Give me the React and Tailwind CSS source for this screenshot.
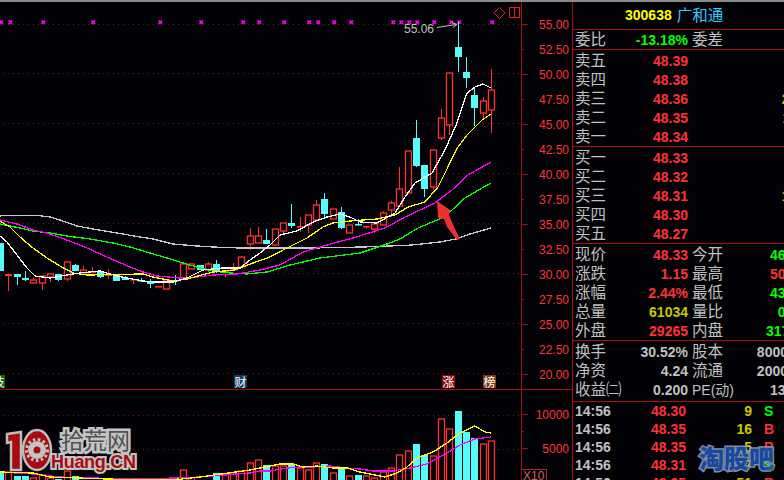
import React from "react";

const RED = "#ff3232";
const CYAN = "#54fcfc";
const BG = "#030307";

// [up, top, bottom, high, low, volume top]
const candles = [
  [0, 243, 271, 243, 271, 472], [1, 274, 276, 274, 291, 472], [0, 274, 277, 274, 285, 476], [0, 278, 280, 271, 281, 476],
  [1, 280, 283, 278, 283, 478], [1, 276, 283, 276, 290, 475], [1, 274, 277, 274, 282, 478], [0, 274, 280, 274, 281, 479],
  [1, 262, 279, 261, 281, 471], [0, 265, 271, 264, 271, 476], [1, 270, 273, 266, 274, 482], [1, 271, 273, 267, 273, 482],
  [0, 271, 277, 271, 278, 482], [1, 274, 276, 269, 279, 482], [0, 274, 281, 274, 281, 482], [0, 278, 280, 276, 280, 482],
  [1, 279, 280, 279, 284, 482], [0, 280, 281, 278, 282, 482], [0, 282, 284, 279, 288, 482], [1, 286, 287, 286, 287, 482],
  [1, 280, 289, 280, 289, 482], [0, 280, 281, 275, 285, 478], [1, 264, 279, 264, 279, 470], [1, 264, 269, 264, 269, 478],
  [0, 265, 270, 265, 270, 482], [1, 264, 270, 262, 272, 482], [0, 264, 272, 260, 273, 473], [1, 270, 272, 270, 277, 474],
  [1, 269, 270, 263, 270, 473], [1, 257, 267, 256, 267, 471], [1, 236, 244, 228, 250, 463], [1, 236, 243, 227, 243, 460],
  [0, 240, 244, 229, 244, 465], [1, 229, 245, 229, 245, 466], [1, 223, 231, 223, 235, 466], [0, 223, 226, 204, 228, 464],
  [1, 226, 227, 217, 232, 468], [1, 215, 225, 215, 233, 470], [1, 205, 220, 200, 220, 463], [0, 199, 214, 193, 219, 464],
  [1, 209, 219, 209, 219, 473], [0, 212, 228, 207, 229, 469], [1, 225, 233, 225, 233, 476], [0, 224, 225, 219, 226, 475],
  [1, 226, 227, 226, 229, 476], [1, 224, 229, 224, 233, 478], [1, 213, 225, 211, 225, 472], [1, 203, 210, 201, 217, 468],
  [1, 189, 206, 167, 206, 455], [1, 151, 193, 151, 193, 451], [0, 138, 166, 120, 167, 444], [0, 165, 189, 165, 197, 455],
  [1, 150, 187, 150, 190, 456], [1, 118, 138, 109, 140, 419], [1, 73, 125, 73, 135, 429], [0, 47, 57, 22, 72, 411],
  [0, 72, 78, 57, 88, 432], [0, 95, 108, 88, 126, 438], [1, 101, 113, 97, 118, 444], [1, 90, 110, 69, 133, 441],
];

const candleX = (i) => Math.round(1 + 8.32 * i) - 0.5;

const lines = [
  { color: "#c8c8c8", pts: "0,216 5,215.5 38,215.5 50,217 60,220 77,226 93,229 117,233 140,237 153,239 173,244 197,246 213,247 240,248 290,248 313,248 363,247 390,246 412,245 440,242 456,239 470,234 491,228" },
  { color: "#00ff00", pts: "0,224 20,228 33,231 50,233 67,236 90,239 113,243 130,247 150,253 167,258 183,263 200,268 213,271 230,273 247,274 267,272 290,265 320,258 360,253 390,243 400,239 418,228 442,218 452,210 465,198 482,188 491,183" },
  { color: "#ff00ff", pts: "0,220 17,224 33,230 47,233 67,240 87,248 107,257 130,267 143,272 157,276 180,278 197,277 213,275 237,274 260,270 280,265 303,252 327,245 353,238 385,228 405,217 435,203 452,190 468,175 491,162" },
  { color: "#ffff00", pts: "0,221 10,227 20,237 33,248 47,258 60,266 73,273 87,275 143,274 153,277 173,281 187,279 213,272 235,270 253,263 270,257 283,250 307,238 323,227 333,223 350,221 377,219 395,215 408,207 425,202 438,187 448,167 458,147 467,135 482,120 491,114" },
  { color: "#ffffff", pts: "0,236 7,242 17,255 27,268 35,276 50,278 67,275 80,273 100,271 117,276 127,278 143,281 155,282 173,282 187,278 203,270 223,268 240,268 250,260 260,253 270,245 280,235 297,231 313,222 327,217 340,214 350,217 360,222 377,223 395,213 405,197 415,183 432,173 445,150 457,123 467,93 475,87 483,84 491,88" },
];

const volLines = [
  { color: "#ff00ff", pts: "0,472 33,474 60,477 90,478 147,479 173,478 200,477 250,473 260,471 270,471 287,468 300,467 313,467 330,466 347,468 360,469 373,471 393,471 410,468 427,464 447,453 460,445 475,439 491,437" },
  { color: "#ffff00", pts: "0,472 33,473 50,477 107,479 147,480 173,480 200,477 250,470 260,468 270,466 280,464 293,464 303,467 317,466 333,468 347,468 360,472 370,474 385,477 397,473 407,467 417,458 433,452 447,443 460,433 475,426 485,432 491,433" },
];

const marks = [1, 10, 43, 93, 160, 201, 243, 259, 284, 309, 318, 334, 351, 393, 401, 409, 417, 434, 451, 459, 492];
const gridTop = [24, 73, 123, 173, 223, 273, 323, 373];
const axisLabels = ["55.00", "52.50", "50.00", "47.50", "45.00", "42.50", "40.00", "37.50", "35.00", "32.50", "30.00", "27.50", "25.00", "22.50", "20.00"];

const sellRows = [["卖五", "48.39"], ["卖四", "48.38"], ["卖三", "48.36", "235"], ["卖二", "48.35", "110"], ["卖一", "48.34"]];
const buyRows = [["买一", "48.33"], ["买二", "48.32"], ["买三", "48.31", "120"], ["买四", "48.30"], ["买五", "48.27"]];
const quoteRows = [
  ["现价", "48.33", "text-[#ff3232]", "今开", "46.85", "text-[#00ff00]"],
  ["涨跌", "1.15", "text-[#ff3232]", "最高", "50.40", "text-[#ff3232]"],
  ["涨幅", "2.44%", "text-[#ff3232]", "最低", "43.80", "text-[#00ff00]"],
  ["总量", "61034", "text-[#c8c800]", "量比", "0.92", "text-[#00ff00]"],
  ["外盘", "29265", "text-[#ff3232]", "内盘", "31769", "text-[#00ff00]"],
];
const infoRows = [
  ["换手", "30.52%", "股本", "8000万", "text-[#c0c0c0] pr-[3px]"],
  ["净资", "4.24", "流通", "2000万", "text-[#c0c0c0] pr-[3px]"],
  ["收益㈡", "0.200", <span key="pe" className="text-[14px]">PE(动)</span>, "13.50", "text-[#c0c0c0]"],
];
const ticks = [
  ["48.30", "9", "S"],
  ["48.35", "16", "B"],
  ["48.35", "5", "B"],
  ["48.31", "7", "S"],
  ["48.35", "51", "B"],
];

function PriceChart() {
  return (
    <svg viewBox="0 2 521 387" className="block w-[521px] h-[387px]">
      {gridTop.map((y) => (
        <line key={y} x1="3" x2="521" y1={y + 0.5} y2={y + 0.5} stroke="#8a1010" strokeDasharray="1 4" />
      ))}
      {marks.map((x) => (
        <path key={x} d={`M${x - 1.5} 20.5l3.5 3.5m0 -3.5l-3.5 3.5`} stroke="#ff00ff" strokeWidth="1.7" fill="none" />
      ))}
      <path d="M499.5 7.5l5.5 5.5-5.5 5.5-5.5-5.5z" fill="none" stroke="#e02020" />
      <path d="M509.5 7.5h10v10h-10zM514.5 7.5v10" fill="none" stroke="#e02020" />

      {candles.map(([up, top, bottom, high, low], i) => {
        const x = candleX(i);
        const color = up ? RED : CYAN;
        return (
          <g key={i}>
            <line x1={x} x2={x} y1={high} y2={low} stroke={color} />
            {bottom - top <= 2 ? (
              <rect x={x - 3.5} y={top} width="7" height={Math.max(bottom - top, 1.5)} fill={color} />
            ) : up ? (
              <rect x={x - 3} y={top} width="6" height={bottom - top} fill={BG} stroke={color} strokeWidth="1.3" />
            ) : (
              <rect x={x - 3.5} y={top} width="7" height={bottom - top} fill={color} />
            )}
          </g>
        );
      })}

      {lines.map((l) => (
        <polyline key={l.color} points={l.pts} fill="none" stroke={l.color} strokeWidth="1.3" shapeRendering="crispEdges" />
      ))}

      <polygon points="437,201 450,210 449,215 454,227 460,239 457,240 447,227 444,219 438,218" fill="#f03030" />

      <text x="404" y="33" fontSize="12" fill="#c0c0c0" className="font-['Liberation_Sans',sans-serif]">
        55.06
      </text>
      <path d="M437 27.5L456 24.5M452 22.5l5 2-4 3" fill="none" stroke="#c0c0c0" />
    </svg>
  );
}

function VolumeChart() {
  return (
    <svg viewBox="0 390 521 90" className="block w-[521px] h-[90px]">
      {[415, 449].map((y) => (
        <line key={y} x1="3" x2="521" y1={y + 0.5} y2={y + 0.5} stroke="#8a1010" strokeDasharray="1 4" />
      ))}
      {candles.map(([up, , , , , vol], i) => {
        const x = candleX(i);
        return up ? (
          <rect key={i} x={x - 3} y={vol} width="6" height={484 - vol} fill={BG} stroke={RED} strokeWidth="1.3" />
        ) : (
          <rect key={i} x={x - 3.5} y={vol} width="7" height={484 - vol} fill={CYAN} />
        );
      })}
      {volLines.map((l) => (
        <polyline key={l.color} points={l.pts} fill="none" stroke={l.color} strokeWidth="1.3" shapeRendering="crispEdges" />
      ))}
    </svg>
  );
}

function Badge({ className, children }) {
  return (
    <div
      className={`absolute top-[373px] w-[13px] h-[13px] flex items-center justify-center text-[12px] leading-none text-white font-['Noto_Sans_CJK_SC',sans-serif] ${className}`}
    >
      {children}
    </div>
  );
}

function Axis() {
  return (
    <div className="w-[51px] border-l border-[#a81010] pt-[10px] font-['Liberation_Sans',sans-serif] text-[12px] text-[#ff3232]">
      {axisLabels.map((label, i) => (
        <div key={label} className="h-[25px] flex items-center justify-between pr-[3px]">
          <div className={`h-px bg-[#a81010] ${i % 2 ? "w-[2px]" : "w-[6px]"}`} />
          <span>{label}</span>
        </div>
      ))}
    </div>
  );
}

function VolumeAxis() {
  return (
    <div className="w-[51px] h-[90px] border-l border-[#a81010] pt-[16px] flex flex-col font-['Liberation_Sans',sans-serif] text-[12px] text-[#ff3232]">
      <div className="h-[17px] flex items-center justify-between pr-[3px]">
        <div className="h-px w-[6px] bg-[#a81010]" />
        <span>10000</span>
      </div>
      <div className="h-[17px] flex items-center">
        <div className="h-px w-[2px] bg-[#a81010]" />
      </div>
      <div className="h-[17px] flex items-center justify-between pr-[3px]">
        <div className="h-px w-[6px] bg-[#a81010]" />
        <span>5000</span>
      </div>
      <div className="mt-auto w-[26px] h-[11px] -ml-px border-t border-r border-[#c02020] overflow-hidden leading-[13px] pl-[2px] text-[#d06060]">
        X10
      </div>
    </div>
  );
}

function Row({ label, value, valueClass, label2, value2, value2Class }) {
  return (
    <div className="h-[19px] flex items-center whitespace-nowrap">
      <span className="w-[60px] shrink-0 text-[15.5px] text-[#c0c0c0] leading-none">{label}</span>
      <span className={`w-[53px] shrink-0 text-right text-[14px] font-bold leading-none ${valueClass}`}>{value}</span>
      <span className="w-[42px] shrink-0 ml-[4px] text-[15.5px] text-[#c0c0c0] leading-none">{label2}</span>
      <span className={`w-[71px] shrink-0 text-right text-[14px] font-bold leading-none ${value2Class}`}>{value2}</span>
    </div>
  );
}

function Panel() {
  return (
    <div className="w-[212px] h-[478px] border-l border-[#a81010] overflow-hidden font-['Liberation_Sans','Noto_Sans_CJK_SC',sans-serif]">
      <div className="h-[28px] border-b border-[#a81010] flex items-center whitespace-nowrap pl-[52px]">
        <span className="text-[14px] font-bold text-[#ffff00]">300638</span>
        <span className="ml-[5px] text-[15.5px] text-[#2ccbff]">广和通</span>
      </div>
      <div className="h-[20px] border-b border-[#a81010] pl-[2px] flex items-center">
        <div className="flex-1">
          <Row label="委比" value="-13.18%" valueClass="text-[#00ff00]" label2="委差" value2="" />
        </div>
      </div>
      <div className="border-b border-[#a81010] pt-px pl-[2px]">
        {sellRows.map(([l, p, v]) => (
          <Row key={l} label={l} value={p} valueClass="text-[#ff3232]" label2="" value2={v} value2Class="text-[#c8c800]" />
        ))}
      </div>
      <div className="border-b border-[#a81010] pt-px pl-[2px]">
        {buyRows.map(([l, p, v]) => (
          <Row key={l} label={l} value={p} valueClass="text-[#ff3232]" label2="" value2={v} value2Class="text-[#c8c800]" />
        ))}
      </div>
      <div className="border-b border-[#a81010] pt-px pl-[2px]">
        {quoteRows.map(([l, v, c, l2, v2, c2]) => (
          <Row key={l} label={l} value={v} valueClass={c} label2={l2} value2={v2} value2Class={c2} />
        ))}
      </div>
      <div className="border-b border-[#a81010] pt-px pb-[2px] pl-[2px]">
        {infoRows.map(([l, v, l2, v2, c2]) => (
          <Row key={l} label={l} value={v} valueClass="text-[#c0c0c0]" label2={l2} value2={v2} value2Class={c2} />
        ))}
      </div>
      <div className="pl-[2px]">
        {ticks.map(([p, v, s], i) => (
          <div key={i} className="h-[18px] flex items-center text-[14px] font-bold leading-none whitespace-nowrap">
            <span className="w-[50px] shrink-0 text-[#c0c0c0]">14:56</span>
            <span className="w-[61px] shrink-0 text-right text-[#ff3232]">{p}</span>
            <span className="w-[66px] shrink-0 text-right text-[#c8c800]">{v}</span>
            <span className={`ml-[12px] ${s === "S" ? "text-[#00ff00]" : "text-[#ff3232]"}`}>{s}</span>
          </div>
        ))}
      </div>
    </div>
  );
}

function HuangLogo() {
  return (
    <div className="absolute left-[4px] top-[428px] w-[134px] h-[48px]">
      <svg viewBox="0 0 50 48" className="absolute left-0 top-0 w-[50px] h-[48px]">
        <path d="M3 6l14-2v38H7V14l-4 1z" fill="#a80c10" stroke="#bdbdbd" strokeWidth="2.5" />
        <ellipse cx="33" cy="22" rx="14" ry="20" fill="#a80c10" stroke="#bdbdbd" strokeWidth="2.5" />
        <circle cx="33" cy="22" r="9" fill="#c4c4c4" />
        <circle cx="33" cy="22" r="10.5" fill="none" stroke="#c4c4c4" strokeWidth="3" strokeDasharray="2.5 2.5" />
        <circle cx="33" cy="22" r="3.5" fill="#a80c10" />
      </svg>
      <div className="absolute left-[57px] top-[-1px] text-[23px] leading-[25px] whitespace-nowrap text-[#505050] font-['Noto_Sans_CJK_SC',sans-serif] [-webkit-text-stroke:5px_#c4c4c4] [paint-order:stroke_fill]">
        拾荒网
      </div>
      <div className="absolute left-[47px] top-[22px] text-[18px] leading-[24px] font-bold tracking-[-0.3px] whitespace-nowrap text-[#a80c10] font-['Liberation_Sans',sans-serif] [-webkit-text-stroke:4px_#c4c4c4] [paint-order:stroke_fill]">
        Huang.CN
      </div>
    </div>
  );
}

export default function App() {
  return (
    <div className="relative w-[784px] h-[480px] overflow-hidden bg-[#030307]">
      <div className="h-[2px] bg-[#8a8a8a]" />
      <div className="flex">
        <div className="w-[572px] shrink-0">
          <div className="relative h-[388px] flex border-b border-[#a81010]">
            <PriceChart />
            <Axis />
            <Badge className="left-[-8px] bg-[#0a6a14]">技</Badge>
            <Badge className="left-[234px] bg-[#0f3c64]">财</Badge>
            <Badge className="left-[442px] bg-[#8b0a0a]">涨</Badge>
            <Badge className="left-[483px] bg-[#7a4010]">榜</Badge>
          </div>
          <div className="flex">
            <VolumeChart />
            <VolumeAxis />
          </div>
        </div>
        <Panel />
      </div>
      <HuangLogo />
      <div className="absolute left-[699px] top-[442px] text-[25px] leading-[30px] font-black whitespace-nowrap text-[#1850b0] font-['Noto_Sans_CJK_SC',sans-serif] [-webkit-text-stroke:3px_#8f9bb0] [paint-order:stroke_fill] opacity-90">
        淘股吧
      </div>
    </div>
  );
}
